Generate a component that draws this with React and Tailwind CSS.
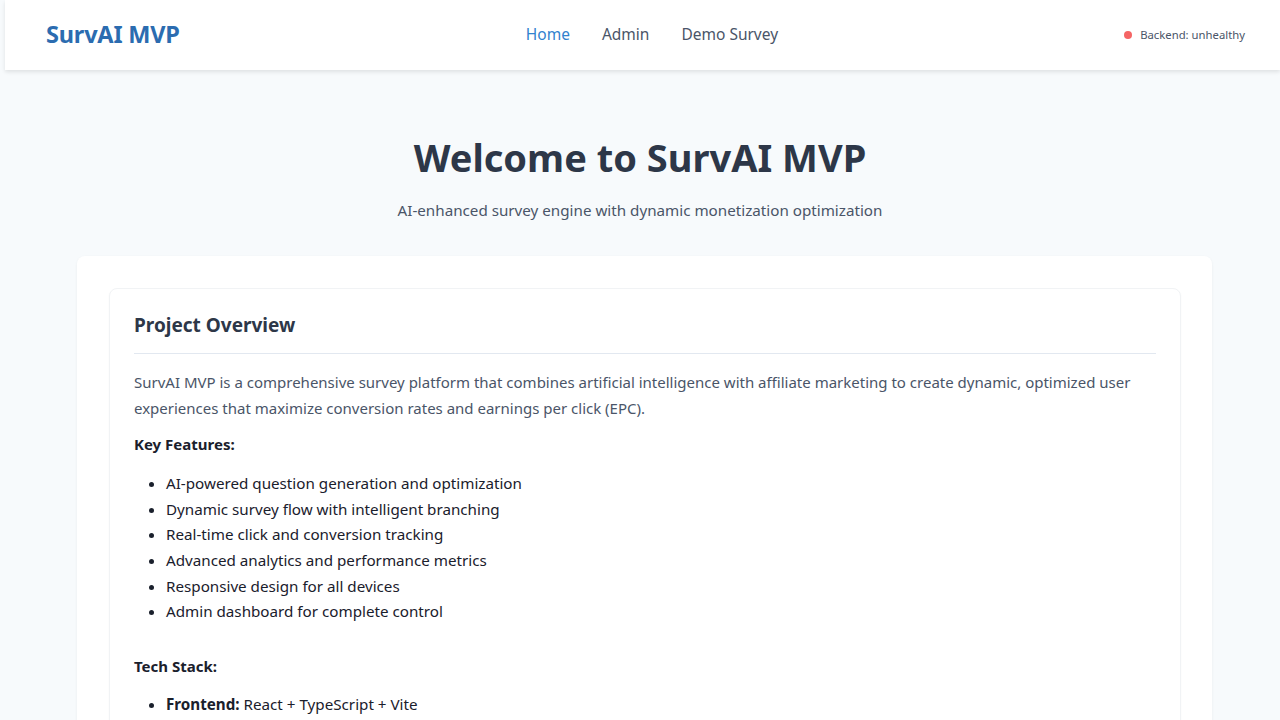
import React from "react";

const features = [
  "AI-powered question generation and optimization",
  "Dynamic survey flow with intelligent branching",
  "Real-time click and conversion tracking",
  "Advanced analytics and performance metrics",
  "Responsive design for all devices",
  "Admin dashboard for complete control",
];

const stack = [
  { label: "Frontend:", value: "React + TypeScript + Vite" },
  { label: "Backend:", value: "FastAPI + Python" },
  { label: "Database:", value: "PostgreSQL" },
];

const Header = () => (
  <header className="ml-[5px] h-[70px] bg-white shadow-[0_2px_4px_rgba(0,0,0,0.1)] flex items-center justify-between pl-[41px] pr-[35px]">
    <h1 className="text-[23.5px] font-bold text-[#2b6cb0] tracking-[-0.2px]">SurvAI MVP</h1>
    <nav className="flex items-center gap-8 text-[15.5px] -mt-[1px]">
      <a className="text-[#3182ce]">Home</a>
      <a className="text-[#4a5568]">Admin</a>
      <a className="text-[#4a5568]">Demo Survey</a>
    </nav>
    <div className="flex items-center gap-2 text-[11.3px] text-[#4a5568]">
      <span className="w-2 h-2 rounded-full bg-[#f56565]" />
      <span>Backend: unhealthy</span>
    </div>
  </header>
);

const App = () => {
  return (
    <div
      className="min-h-screen bg-[#f7fafc] overflow-hidden"
      style={{ fontFamily: '"Noto Sans", "Open Sans", sans-serif' }}
    >
      <Header />

      <main className="pt-[64px]">
        <div className="text-center">
          <h1 className="text-[38px] font-bold text-[#2d3748] leading-tight">
            Welcome to SurvAI MVP
          </h1>
          <p className="mt-[17px] text-[15.2px] text-[#4a5568]">
            AI-enhanced survey engine with dynamic monetization optimization
          </p>
        </div>

        <div className="mt-[35px] ml-[77px] w-[1135px] bg-white rounded-lg shadow-[0_1px_3px_rgba(0,0,0,0.06)] pl-[32px] pr-[31px] pt-[32px] pb-8">
          <div className="rounded-lg border border-[#f1f3f5] shadow-[0_1px_2px_rgba(0,0,0,0.04)] px-6 pt-[22px] pb-6">
            <h2 className="text-[19px] font-bold text-[#2d3748] pb-[13px] border-b border-[#e2e8f0]">
              Project Overview
            </h2>
            <p className="mt-[15px] text-[15px] leading-[26px] text-[#4a5568]">
              SurvAI MVP is a comprehensive survey platform that combines artificial intelligence with affiliate marketing to create dynamic, optimized user experiences that maximize conversion rates and earnings per click (EPC).
            </p>
            <h3 className="mt-[12px] text-[15px] font-bold text-[#1a202c]">Key Features:</h3>
            <ul className="mt-[16px] list-disc pl-8 text-[15.2px] leading-[25.6px] text-[#1a202c]">
              {features.map((f) => (
                <li key={f}>{f}</li>
              ))}
            </ul>
            <h3 className="mt-[30px] text-[15px] font-bold text-[#1a202c]">Tech Stack:</h3>
            <ul className="mt-[15px] list-disc pl-8 text-[15.2px] leading-[25.6px] text-[#1a202c]">
              {stack.map((s) => (
                <li key={s.label}>
                  <strong>{s.label}</strong> {s.value}
                </li>
              ))}
            </ul>
          </div>
        </div>
      </main>
    </div>
  );
};

export default App;
